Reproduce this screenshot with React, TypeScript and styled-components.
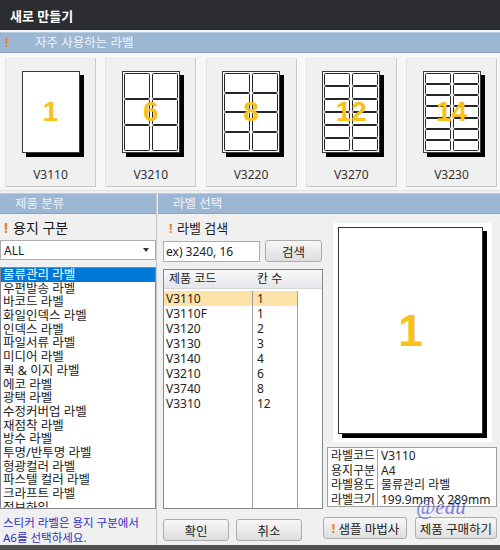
import React from 'react';
import styled, { createGlobalStyle } from 'styled-components';

const GlobalStyle = createGlobalStyle`
  html, body {
    margin: 0;
    padding: 0;
    background: #f0f0f0;
  }
  body {
    font-family: "Noto Sans", "Noto Sans CJK KR", sans-serif;
    color: #222;
  }
`;

const Window = styled.div`
  position: relative;
  width: 500px;
  height: 550px;
  overflow: hidden;
  display: flex;
  flex-direction: column;
  background: #f0f0f0;
`;

const TitleBar = styled.div`
  height: 30px;
  flex-shrink: 0;
  display: flex;
  align-items: center;
  padding-left: 10px;
  background: #2b2d31;
  border-bottom: 2px solid #f4f4f4;
  color: #ffffff;
  font-size: 13px;
  font-weight: 700;
`;

const Band = styled.div<{ $indent?: number }>`
  height: 19px;
  flex-shrink: 0;
  display: flex;
  align-items: center;
  padding-left: ${(p) => p.$indent ?? 15}px;
  background: #9cb7d4;
  border-top: 1px solid #b9cde2;
  border-bottom: 1px solid #8ba3bf;
  color: #eef3fa;
  font-size: 12.5px;
  line-height: 19px;
`;

const Bang = styled.span<{ $width?: number }>`
  display: inline-block;
  width: ${(p) => p.$width ?? 8}px;
  color: #f07c1e;
  font-weight: 700;
  flex-shrink: 0;
`;

const TileRow = styled.div`
  height: 129px;
  flex-shrink: 0;
  display: flex;
  justify-content: space-between;
  padding: 5px 3px 3px 5px;
  background: #f7f7f7;
  border-bottom: 1px solid #e0e0e0;
  margin-bottom: 1px;
`;

const Tile = styled.div`
  width: 91px;
  height: 129px;
  box-sizing: border-box;
  display: flex;
  flex-direction: column;
  align-items: center;
  padding-top: 12px;
  background: #f0f0f0;
  border: 1px solid #e4e4e4;
  border-right-color: #c9c9c9;
  border-bottom-color: #c9c9c9;
`;

const Sheet = styled.div<{ $rows: number; $cols: number; $w: number; $h: number; $shadow: number }>`
  position: relative;
  width: ${(p) => p.$w}px;
  height: ${(p) => p.$h}px;
  box-sizing: border-box;
  background: #ffffff;
  border: 1px solid #3a3a3a;
  box-shadow: ${(p) => p.$shadow}px ${(p) => p.$shadow}px 0 #000000;
  display: grid;
  grid-template-columns: repeat(${(p) => p.$cols}, 1fr);
  grid-template-rows: repeat(${(p) => p.$rows}, 1fr);
  gap: 0 2px;
  padding: 1px;
`;

const Cell = styled.div`
  border: 1.5px solid #262626;
  border-radius: 1.5px;
  background: #ffffff;
`;

const SheetNumber = styled.div<{ $size: number }>`
  position: absolute;
  inset: 0;
  display: flex;
  align-items: center;
  justify-content: center;
  font-family: "Liberation Sans", Arial, sans-serif;
  font-weight: 700;
  font-size: ${(p) => p.$size}px;
  color: #f8c11c;
  pointer-events: none;
`;

const TileCaption = styled.div`
  margin-top: 15px;
  font-size: 12px;
  line-height: 14px;
  color: #333;
`;

const Lower = styled.div`
  flex: 1;
  display: flex;
  min-height: 0;
  margin-top: 1px;
`;

const LeftCol = styled.div`
  width: 156px;
  flex-shrink: 0;
  display: flex;
  flex-direction: column;
  border-right: 1px solid #c6c6c6;
`;

const RightArea = styled.div`
  flex: 1;
  display: flex;
  flex-direction: column;
  margin-left: 1px;
`;

const Panels = styled.div`
  flex: 1;
  display: flex;
`;

const FieldTitle = styled.div<{ $size: number; $indent: number }>`
  height: 26px;
  display: flex;
  align-items: flex-end;
  padding: 0 0 3px ${(p) => p.$indent}px;
  box-sizing: border-box;
  font-size: ${(p) => p.$size}px;
  line-height: 18px;
  color: #1a1a1a;
`;

const SelectBox = styled.div`
  height: 20px;
  box-sizing: border-box;
  display: flex;
  align-items: center;
  justify-content: space-between;
  padding: 0 6px 0 3px;
  background: #ffffff;
  border: 1px solid #adadad;
  font-size: 12px;
`;

const Caret = styled.span`
  width: 0;
  height: 0;
  border-left: 3.5px solid transparent;
  border-right: 3.5px solid transparent;
  border-top: 4px solid #333;
`;

const ListBox = styled.div`
  margin-top: 7px;
  height: 242px;
  box-sizing: border-box;
  overflow: hidden;
  background: #ffffff;
  border: 1px solid #828790;
`;

const ListItem = styled.div<{ $active?: boolean }>`
  height: 13.7px;
  line-height: 13.7px;
  padding-left: 2px;
  font-size: 12.5px;
  white-space: nowrap;
  background: ${(p) => (p.$active ? '#0078d7' : 'transparent')};
  color: ${(p) => (p.$active ? '#ffffff' : '#222')};
`;

const Note = styled.div`
  margin-top: 6px;
  padding-left: 3px;
  font-size: 11.5px;
  line-height: 15px;
  color: #2f2fc8;
`;

const MidCol = styled.div`
  width: 165px;
  flex-shrink: 0;
  box-sizing: border-box;
  padding-left: 5px;
  display: flex;
  flex-direction: column;
`;

const SearchRow = styled.div`
  display: flex;
  align-items: center;
  gap: 5px;
  height: 22px;
`;

const SearchInput = styled.input`
  width: 97px;
  height: 21px;
  box-sizing: border-box;
  padding: 0 2px;
  border: 1px solid #abadb3;
  background: #ffffff;
  font-family: inherit;
  font-size: 12px;
  color: #222;
  outline: none;
`;

const Button = styled.button<{ $w: number }>`
  width: ${(p) => p.$w}px;
  height: 22px;
  padding: 0;
  box-sizing: border-box;
  border: 1px solid #acacac;
  border-radius: 3px;
  background: linear-gradient(#f7f7f7, #dedede);
  font-family: inherit;
  font-size: 12.5px;
  color: #222;
  display: flex;
  align-items: center;
  justify-content: center;
  gap: 2px;
`;

const Table = styled.div`
  margin-top: 7px;
  width: 160px;
  height: 240px;
  box-sizing: border-box;
  display: flex;
  flex-direction: column;
  background: #ffffff;
  border: 1px solid #828790;
`;

const TableHead = styled.div`
  height: 18px;
  flex-shrink: 0;
  display: grid;
  grid-template-columns: 89px 45px 1fr;
  background: linear-gradient(#f9f9f9, #e3e6ea);
  border-bottom: 1px solid #d5d5d5;
  font-size: 12px;
  line-height: 18px;
`;

const HeadCell = styled.div<{ $pad: number }>`
  padding-left: ${(p) => p.$pad}px;
`;

const TableBody = styled.div`
  flex: 1;
  display: grid;
  grid-template-columns: 89px 45px 1fr;
  padding-top: 2px;
`;

const Column = styled.div<{ $line?: boolean }>`
  border-right: ${(p) => (p.$line ? '1px solid #a0a0a0' : 'none')};
`;

const Row = styled.div<{ $active?: boolean; $pad: number }>`
  height: 15px;
  line-height: 15px;
  padding-left: ${(p) => p.$pad}px;
  font-size: 12px;
  background: ${(p) => (p.$active ? '#fde3a8' : 'transparent')};
`;

const ButtonRow = styled.div<{ $gap: number }>`
  display: flex;
  gap: ${(p) => p.$gap}px;
  margin-top: 10px;
`;

const PreviewCol = styled.div`
  flex: 1;
  display: flex;
  flex-direction: column;
`;

const PreviewFrame = styled.div`
  margin: 9px 0 0 10px;
  width: 159px;
  height: 219px;
  box-sizing: border-box;
  padding: 4px 9px 8px 5px;
  background: #ffffff;
`;

const PreviewSheet = styled.div`
  position: relative;
  width: 100%;
  height: 100%;
  box-sizing: border-box;
  border: 1px solid #333;
  box-shadow: 4px 4px 0 #000;
  background: #fff;
`;

const InfoBox = styled.div`
  margin: 5px 0 0 4px;
  width: 170px;
  height: 60px;
  box-sizing: border-box;
  display: grid;
  grid-template-columns: 50px 1fr;
  grid-auto-rows: 14.5px;
  padding-top: 1px;
  background: #ffffff;
  border: 1px solid #a0a0a0;
  font-size: 12px;
  line-height: 14.5px;
`;

const InfoKey = styled.div`
  padding-left: 3px;
  border-right: 1px solid #a0a0a0;
  white-space: nowrap;
`;

const InfoValue = styled.div`
  padding-left: 3px;
  white-space: nowrap;
`;

const Watermark = styled.div`
  position: absolute;
  left: 416px;
  top: 497px;
  font-family: "Liberation Serif", serif;
  font-style: italic;
  font-size: 21px;
  line-height: 21px;
  color: rgba(84, 84, 214, 0.75);
  pointer-events: none;
`;

const BottomStrip = styled.div`
  height: 5px;
  flex-shrink: 0;
  background: #505050;
`;

const tiles = [
  { code: 'V3110', n: 1, rows: 0, cols: 1 },
  { code: 'V3210', n: 6, rows: 3, cols: 2 },
  { code: 'V3220', n: 8, rows: 4, cols: 2 },
  { code: 'V3270', n: 12, rows: 6, cols: 2 },
  { code: 'V3230', n: 14, rows: 7, cols: 2 },
];

const categories = [
  '물류관리 라벨', '우편발송 라벨', '바코드 라벨', '화일인덱스 라벨', '인덱스 라벨',
  '파일서류 라벨', '미디어 라벨', '퀵 & 이지 라벨', '에코 라벨', '광택 라벨',
  '수정커버업 라벨', '재점착 라벨', '방수 라벨', '투명/반투명 라벨', '형광컬러 라벨',
  '파스텔 컬러 라벨', '크라프트 라벨', '정보하임',
];

const products = [
  ['V3110', '1'], ['V3110F', '1'], ['V3120', '2'], ['V3130', '3'],
  ['V3140', '4'], ['V3210', '6'], ['V3740', '8'], ['V3310', '12'],
];

const info = [
  ['라벨코드', 'V3110'],
  ['용지구분', 'A4'],
  ['라벨용도', '물류관리 라벨'],
  ['라벨크기', '199.9mm X 289mm'],
];

const App = () => {
  return (
    <Window>
      <GlobalStyle />
      <TitleBar>새로 만들기</TitleBar>
      <Band $indent={5}>
        <Bang $width={30}>!</Bang>
        자주 사용하는 라벨
      </Band>
      <TileRow>
        {tiles.map((t) => (
          <Tile key={t.code}>
            <Sheet $rows={Math.max(t.rows, 1)} $cols={t.cols} $w={58} $h={82} $shadow={4}>
              {Array.from({ length: t.rows * t.cols }).map((_, i) => (
                <Cell key={i} />
              ))}
              <SheetNumber $size={28}>{t.n}</SheetNumber>
            </Sheet>
            <TileCaption>{t.code}</TileCaption>
          </Tile>
        ))}
      </TileRow>
      <Lower>
        <LeftCol>
          <Band>제품 분류</Band>
          <FieldTitle $size={14} $indent={4}>
            <Bang $width={9}>!</Bang>용지 구분
          </FieldTitle>
          <SelectBox>
            ALL
            <Caret />
          </SelectBox>
          <ListBox>
            {categories.map((c, i) => (
              <ListItem key={c} $active={i === 0}>{c}</ListItem>
            ))}
          </ListBox>
          <Note>
            스티커 라벨은 용지 구분에서
            <br />
            A6를 선택하세요.
          </Note>
        </LeftCol>
        <RightArea>
          <Band>라벨 선택</Band>
          <Panels>
            <MidCol>
              <FieldTitle $size={13} $indent={6}>
                <Bang $width={8}>!</Bang>라벨 검색
              </FieldTitle>
              <SearchRow>
                <SearchInput defaultValue="ex) 3240, 16" />
                <Button $w={57}>검색</Button>
              </SearchRow>
              <Table>
                <TableHead>
                  <HeadCell $pad={5}>제품 코드</HeadCell>
                  <HeadCell $pad={4}>칸 수</HeadCell>
                  <HeadCell $pad={0} />
                </TableHead>
                <TableBody>
                  <Column $line>
                    {products.map(([code], i) => (
                      <Row key={code} $active={i === 0} $pad={2}>{code}</Row>
                    ))}
                  </Column>
                  <Column $line>
                    {products.map(([code, n], i) => (
                      <Row key={code} $active={i === 0} $pad={4}>{n}</Row>
                    ))}
                  </Column>
                  <Column />
                </TableBody>
              </Table>
              <ButtonRow $gap={7}>
                <Button $w={66}>확인</Button>
                <Button $w={66}>취소</Button>
              </ButtonRow>
            </MidCol>
            <PreviewCol>
              <PreviewFrame>
                <PreviewSheet>
                  <SheetNumber $size={44}>1</SheetNumber>
                </PreviewSheet>
              </PreviewFrame>
              <InfoBox>
                {info.map(([k, v]) => (
                  <React.Fragment key={k}>
                    <InfoKey>{k}</InfoKey>
                    <InfoValue>{v}</InfoValue>
                  </React.Fragment>
                ))}
              </InfoBox>
              <ButtonRow $gap={8}>
                <Button $w={84}>
                  <Bang $width={6}>!</Bang>샘플 마법사
                </Button>
                <Button $w={82}>제품 구매하기</Button>
              </ButtonRow>
            </PreviewCol>
          </Panels>
        </RightArea>
      </Lower>
      <BottomStrip />
      <Watermark>@edu</Watermark>
    </Window>
  );
};

export default App;
